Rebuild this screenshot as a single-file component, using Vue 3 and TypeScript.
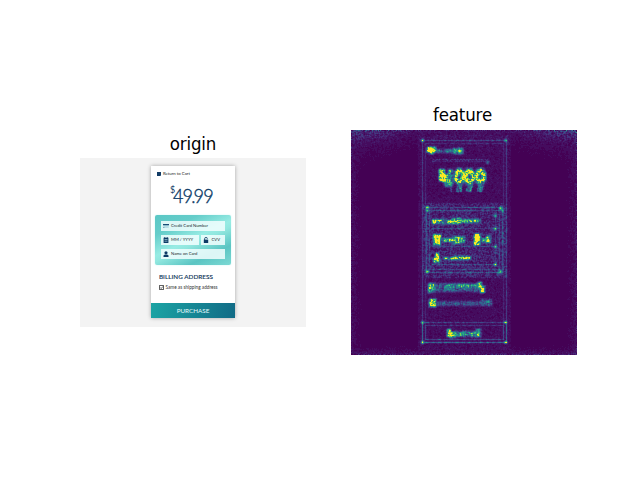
<script setup lang="ts">
type Box = [x0: number, y0: number, x1: number, y1: number, strength: number]

const W = 226
const H = 225

const stops: [number, number, number][] = [
  [68, 1, 84],
  [71, 44, 122],
  [59, 81, 139],
  [44, 113, 142],
  [33, 144, 141],
  [39, 173, 129],
  [92, 200, 99],
  [170, 220, 50],
  [253, 231, 37],
]
const LEVELS = 32

function viridis(t: number): string {
  const p = t * (stops.length - 1)
  const i = Math.min(Math.floor(p), stops.length - 2)
  const c = stops[i].map((v, k) => Math.round(v + (stops[i + 1][k] - v) * (p - i)))
  return `rgb(${c.join(',')})`
}

let seed = 20417
function rand(): number {
  seed = (seed * 1664525 + 1013904223) >>> 0
  return seed / 4294967296
}

// Regions of textured response: glyph runs and icons
const blobs: Box[] = [
  [77, 18, 83, 20, 1.6], [79, 20, 81, 22, 1.3], [86, 20, 102, 21, 0.5],
  [103, 19, 106, 22, 0.8], [108, 19, 110, 22, 1.1],
  [89, 40, 92, 49, 1.7], [92, 45, 95, 50, 1.4], [98, 40, 100, 53, 0.75],
  [94, 52, 100, 55, 0.5],
  [82, 90, 91, 92, 1.0], [96, 91, 99, 92, 1.2], [102, 89, 108, 92, 1.15], [111, 90, 128, 91, 0.9],
  [83, 105, 88, 106, 1.1], [83, 107, 84, 113, 1.0], [87, 107, 88, 113, 1.0], [84, 110, 87, 112, 0.8],
  [93, 109, 101, 110, 1.1], [103, 107, 107, 112, 0.9], [109, 107, 112, 111, 0.9],
  [124, 105, 127, 113, 1.8], [132, 109, 133, 111, 0.9], [136, 107, 138, 111, 1.0],
  [85, 124, 86, 128, 1.3], [83, 129, 87, 131, 1.1], [93, 128, 103, 128, 0.9], [104, 127, 118, 128, 1.15],
  [78, 154, 79, 161, 1.0], [81, 154, 82, 160, 0.7], [84, 154, 128, 160, 0.38], [96, 155, 124, 156, 0.5],
  [128, 153, 129, 156, 1.1], [130, 157, 132, 161, 1.1],
  [79, 170, 83, 175, 1.5], [86, 172, 129, 174, 0.32], [131, 170, 139, 174, 0.4],
  [97, 200, 98, 205, 1.2], [100, 203, 102, 206, 1.0], [104, 202, 124, 205, 0.65], [126, 200, 128, 205, 1.0],
]

// Outlines of the detected cards, fields and the button
const frames: Box[] = [
  [71, 10, 155, 212, 0.2],
  [74, 13, 152, 209, 0.1],
  [75, 77, 151, 142, 0.24],
  [78, 80, 148, 139, 0.18],
  [71, 192, 155, 212, 0.22],
  [74, 195, 152, 209, 0.16],
  [81, 98, 144, 98, 0.2],
  [81, 116, 144, 116, 0.17],
  [81, 134, 144, 134, 0.2],
  [144, 86, 144, 134, 0.16],
]

const corners: [number, number, number][] = [
  [71, 10, 1.1], [154, 10, 0.9], [76, 77, 1.2], [76, 80, 1.0], [149, 78, 1.4], [151, 80, 0.7], [76, 141, 1.4],
  [149, 141, 1.1], [147, 143, 0.7],
  [71, 192, 0.8], [154, 192, 0.9], [71, 212, 1.1], [154, 212, 0.9],
  [144, 85, 0.8], [144, 98, 0.9], [144, 116, 0.9], [144, 134, 0.9], [136, 32, 0.6],
]

const field = new Float32Array(W * H)
function add(x: number, y: number, v: number): void {
  if (x >= 0 && y >= 0 && x < W && y < H) field[y * W + x] += v
}

function smooth(): void {
  const src = field.slice()
  for (let y = 1; y < H - 1; y++) {
    for (let x = 1; x < W - 1; x++) {
      const i = y * W + x
      const sides = src[i - 1] + src[i + 1] + src[i - W] + src[i + W]
      field[i] = src[i] * 0.56 + sides * 0.11
    }
  }
}

function buildField(): void {
  for (let y = 0; y < H; y++) {
    for (let x = 0; x < W; x++) {
      const side = Math.max(0, 1 - Math.min(x, W - 1 - x) / 62)
      const top = Math.exp(-y / 8) * (0.08 + side * 0.25)
      const rim = Math.exp(-Math.min(x, W - 1 - x) / 4) * 0.06 + Math.exp(-(H - 1 - y) / 3) * 0.1
      const body = x > 66 && x < 160 && y > 4 && y < 220 ? 0.05 : 0.008
      const panel = x > 71 && x < 156 && y > 72 && y < 148 ? 0.11 : 0
      const weave = (x + y) % 2 ? 1.25 : 0.6
      add(x, y, (top + rim + body + panel) * Math.pow(rand(), 1.6) * 1.6 * weave)
    }
  }
  for (const [x0, y0, x1, y1, s] of frames) {
    if (x1 > x0) {
      for (let x = x0; x <= x1; x++) {
        const v = s * (x % 6 < 3 ? 0.7 : 1.25)
        add(x, y0, v * (0.4 + rand()))
        if (y1 > y0) add(x, y1, v * (0.4 + rand()))
      }
    }
    for (let y = y0; y <= y1; y++) {
      add(x0, y, s * (0.5 + rand() * 0.7))
      if (x1 > x0) add(x1, y, s * (0.5 + rand() * 0.7))
    }
  }
  for (const [x0, y0, x1, y1, s] of blobs) {
    for (let x = x0 - 3; x <= x1 + 3; x++) {
      const column = 0.6 + rand() * 0.7
      for (let y = y0 - 3; y <= y1 + 3; y++) {
        const d = Math.hypot(Math.max(x0 - x, 0, x - x1), Math.max(y0 - y, 0, y - y1))
        add(x, y, s * column * Math.exp(-d * d * 0.6) * (0.05 + rand() * 1.25))
        if (d > 1 && d < 3) add(x, y, s * 0.12 * rand())
      }
    }
  }
  // Bowls and tails of the price digits
  for (const cx of [108, 118, 129]) {
    for (let y = 37; y <= 63; y++) {
      for (let x = cx - 6; x <= cx + 6; x++) {
        const ring = Math.abs(Math.hypot((x - cx) / 4.4, (y - 46) / 6.4) - 0.78)
        const bowl = Math.exp(-ring * ring * 4.5) * 1.6
        const tail = y > 51 && y < 62 && Math.abs(x - cx + (y - 57) / 4) < 3 ? 0.42 : 0
        add(x, y, Math.max(bowl, tail) * (0.05 + rand() * 1.15))
      }
    }
  }
  for (const cx of [99, 109, 119, 128]) {
    for (let y = 57; y < 62; y++) add(cx + (y % 2), y, 0.5 * rand() + 0.15)
  }
  for (const [cx, cy, s] of corners) {
    for (let y = -3; y <= 3; y++) {
      for (let x = -3; x <= 3; x++) {
        add(cx + x, cy + y, s * Math.exp(-(x * x + y * y) / 1.9) * (0.3 + rand() * 0.75))
      }
    }
  }
  for (let x = 81; x < 139; x++) {
    add(x, 29 + (x % 3 === 0 ? 1 : 0), rand() * 0.34)
    add(x, 31, rand() * 0.16)
  }
  smooth()
}

function buildPaths(): { fill: string; d: string }[] {
  buildField()
  const parts: string[][] = Array.from({ length: LEVELS }, () => [])
  for (let y = 0; y < H; y++) {
    let start = 0
    let level = -1
    for (let x = 0; x <= W; x++) {
      const next = x < W ? Math.round(Math.min(field[y * W + x], 1) * (LEVELS - 1)) : -1
      if (next !== level) {
        if (level > 0) parts[level].push(`M${start} ${y}h${x - start}v1h${start - x}z`)
        start = x
        level = next
      }
    }
  }
  return parts.map((p, i) => ({ fill: viridis(i / (LEVELS - 1)), d: p.join('') })).filter((p) => p.d)
}

const heat = buildPaths()
</script>

<template>
  <main class="figure">
    <section class="plot origin">
      <h2>origin</h2>
      <div class="scene">
        <article class="card">
          <div class="back">
            <svg viewBox="0 0 4 4" width="4" height="4"><path d="M0 0h4v3L3.500 4H0z" fill="#123c66" /></svg>
            <span>Return to Cart</span>
          </div>
          <div class="price"><sup>$</sup><span>49<i>.</i>99</span></div>
          <div class="payment">
            <div class="field">
              <svg viewBox="0 0 6 6" width="6" height="6"><path d="M.3 1h5.4v4H.3z" fill="#b5dfe7" /><path d="M0 1h6v1.2H0zM.3 4h1v.5h-1z" fill="#174c75" /></svg>
              <span>Credit Card Number</span>
            </div>
            <div class="split">
              <div class="field date">
                <svg viewBox="0 0 6 6" width="6" height="6"><path d="M.6.8h.8V0h.8v.8h1.6V0h.8v.8h.8V6H.6z" fill="#0d3b66" /><path d="M1.5 2.2h3v.7h-3zM1.5 3.8h3v.7h-3z" fill="#9fc9d4" /></svg>
                <span>MM / YYYY</span>
              </div>
              <div class="field cvv">
                <svg viewBox="0 0 6 6" width="6" height="6"><path d="M1.6 3V1.8a1.4 1.4 0 0 1 2.8 0" fill="none" stroke="#0d3b66" stroke-width=".8" /><path d="M.8 2.6h4.4V6H.8z" fill="#0d3b66" /></svg>
                <span>CVV</span>
              </div>
            </div>
            <div class="field">
              <svg viewBox="0 0 6 6" width="6" height="6"><circle cx="3" cy="1.8" r="1.6" fill="#0d3b66" /><path d="M.5 6V4.6Q.8 3.7 3 3.6Q5.200 3.700 5.500 4.600V6z" fill="#0d3b66" /></svg>
              <span>Name on Card</span>
            </div>
          </div>
          <h3>BILLING ADDRESS</h3>
          <div class="same">
            <svg viewBox="0 0 5 5" width="5" height="5"><path d="M.4.4h4.2v4.200H.4z" fill="#fff" stroke="#222" stroke-width=".8" /><path d="M1.200 2.500l1 1 1.800-2.100" fill="none" stroke="#222" stroke-width=".7" /></svg>
            <span>Same as shipping address</span>
          </div>
          <div class="purchase">PURCHASE</div>
        </article>
      </div>
    </section>
    <section class="plot feature">
      <h2>feature</h2>
      <svg class="heat" viewBox="0 0 226 225" width="226" height="225" shape-rendering="crispEdges">
        <path v-for="p in heat" :key="p.fill" :d="p.d" :fill="p.fill" />
      </svg>
    </section>
  </main>
</template>

<style>
body {
  margin: 0;
  background: #fff;
}
</style>

<style scoped>
.figure {
  box-sizing: border-box;
  width: 640px;
  height: 480px;
  padding: 105px 63px 0 80px;
  display: flex;
  gap: 45px;
  background: #fff;
  overflow: hidden;
}
.plot {
  width: 226px;
}
.origin {
  padding-top: 29px;
}
h2 {
  box-sizing: border-box;
  margin: 0;
  height: 24px;
  padding-top: 1px;
  font: 16.67px/20px "DejaVu Sans", sans-serif;
  letter-spacing: -0.15px;
  text-align: center;
  color: #000;
  transform: scaleY(1.1);
  transform-origin: 50% 12px;
}
.feature {
  display: flex;
  flex-direction: column;
}
.feature h2 {
  height: 25px;
  flex: none;
  padding-right: 3px;
}
.heat {
  display: block;
  background: #440154;
}
.scene {
  height: 169px;
  padding: 8px 0 0 71px;
  box-sizing: border-box;
  background: #f3f3f3;
}
.card {
  width: 84px;
  height: 152px;
  background: #fff;
  box-shadow: 0 0 4px rgba(0, 0, 0, 0.32);
  display: flex;
  flex-direction: column;
  font-family: Lato, "Liberation Sans", sans-serif;
  color: #0d3558;
  white-space: nowrap;
}
.back {
  display: flex;
  align-items: center;
  gap: 2px;
  height: 5px;
  padding: 5px 0 0 6px;
  font-size: 4.3px;
  line-height: 5px;
  color: #222;
}
.price {
  display: flex;
  height: 24px;
  padding: 7px 0 1px 19px;
  font-size: 20px;
  line-height: 24px;
  font-weight: 300;
  letter-spacing: -1px;
  color: #0d3b66;
}
.price sup {
  font-size: 9px;
  line-height: 14px;
  font-weight: 400;
  width: 3px;
}
.price span {
  transform: scaleX(0.9);
  transform-origin: 0 0;
  -webkit-text-stroke: 0.4px #0d3b66;
}
.price i {
  font-style: normal;
  margin: 0 -1px;
}
.payment {
  box-sizing: border-box;
  width: 76px;
  height: 50px;
  margin: 7px 0 0 4px;
  padding: 6px;
  border-radius: 2px;
  background: linear-gradient(155deg, #5ac7c5 0%, #65cdca 24%, #97ece4 48%, #91e7df 55%, #5bc5c3 77%, #7cd9d4 100%);
  box-shadow: 0 0 2px #c9f5f2;
  display: flex;
  flex-direction: column;
  gap: 4px;
}
.field {
  box-sizing: border-box;
  height: 10px;
  flex: none;
  padding-left: 1.500px;
  display: flex;
  align-items: center;
  gap: 2.500px;
  background: rgba(244, 255, 255, 0.84);
  font-size: 4.200px;
  line-height: 6px;
  color: #17272c;
}
.field svg {
  flex: none;
}
.split {
  display: flex;
  gap: 2px;
}
.date {
  width: 38px;
}
.cvv {
  width: 24px;
}
.cvv svg {
  margin-left: 0.500px;
}
h3 {
  margin: 8px 0 0 8px;
  height: 8px;
  font-size: 6.300px;
  line-height: 8px;
  font-weight: 400;
  letter-spacing: 0.050px;
  -webkit-text-stroke: 0.15px #0d3558;
}
.same {
  display: flex;
  align-items: center;
  gap: 1.500px;
  height: 5px;
  padding: 4px 0 0 8px;
  font-size: 4.700px;
  line-height: 5px;
  color: #333;
}
.purchase {
  height: 15px;
  margin-top: auto;
  background: linear-gradient(100deg, #1ca4a4, #116b86);
  color: #e6fbfc;
  font-size: 6.300px;
  line-height: 15px;
  text-align: center;
}
</style>
